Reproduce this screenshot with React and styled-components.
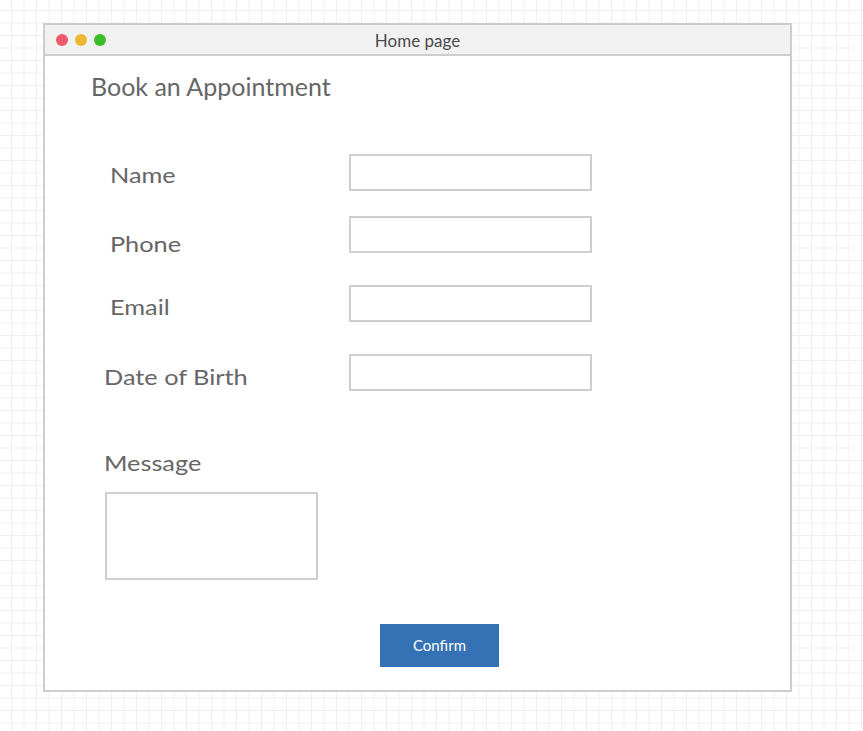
import React from "react";
import styled, { createGlobalStyle } from "styled-components";

const Global = createGlobalStyle`
  html, body { margin: 0; padding: 0; }
  body {
    width: 863px;
    height: 731px;
    overflow: hidden;
    font-family: Lato, "Open Sans", sans-serif;
    background-color: #ffffff;
    background-image:
      linear-gradient(to right, #f0f0f0 1px, transparent 1px),
      linear-gradient(to bottom, #f0f0f0 1px, transparent 1px);
    background-size: 12.5px 12.5px;
    background-position: 11px 10px;
  }
`;

const Page = styled.div`
  padding: 23px 0 0 43px;
`;

const Window = styled.div`
  box-sizing: border-box;
  width: 749px;
  height: 669px;
  border: 2px solid #cdcdcd;
  background: #ffffff;
  display: flex;
  flex-direction: column;
`;

const TitleBar = styled.div`
  position: relative;
  height: 29px;
  background: #f1f1f1;
  border-bottom: 2px solid #cdcdcd;
  display: flex;
  align-items: center;
  justify-content: center;
`;

const Dots = styled.div`
  position: absolute;
  left: 11px;
  top: 0;
  height: 29px;
  display: flex;
  align-items: center;
  gap: 7px;
`;

const Dot = styled.span`
  width: 12px;
  height: 12px;
  border-radius: 50%;
  background: ${(p) => p.$color};
`;

const Title = styled.div`
  font-size: 17px;
  line-height: 29px;
  padding-top: 2px;
  color: #4a4a4a;
`;

const Content = styled.div`
  display: flex;
  flex-direction: column;
  align-items: flex-start;
`;

const Heading = styled.h1`
  margin: 15px 0 0 46px;
  font-weight: 400;
  font-size: 25px;
  line-height: 30px;
  color: #666666;
`;

const Row = styled.div`
  display: flex;
  height: 36px;
  margin-top: ${(p) => p.$top}px;
`;

const LabelText = styled.span`
  display: inline-block;
  font-size: 22px;
  line-height: 26px;
  color: #666666;
  transform: scaleX(1.15);
  transform-origin: left center;
  white-space: nowrap;
`;

const Label = styled.div`
  box-sizing: border-box;
  width: 304px;
  padding-left: ${(p) => p.$indent}px;
  margin-top: ${(p) => p.$shift}px;
  line-height: 26px;
`;

const Field = styled.div`
  box-sizing: border-box;
  width: 243px;
  height: 37px;
  border: 2px solid #cfcfcf;
  background: #ffffff;
`;

const MessageLabel = styled.div`
  margin: 60px 0 0 59px;
  line-height: 26px;
`;

const MessageBox = styled.div`
  box-sizing: border-box;
  width: 213px;
  height: 88px;
  margin: 14px 0 0 60px;
  border: 2px solid #cfcfcf;
`;

const ConfirmButton = styled.button`
  margin: 44px 0 0 335px;
  width: 119px;
  height: 43px;
  border: none;
  background: #3571b5;
  color: #ffffff;
  font-family: Lato, "Open Sans", sans-serif;
  font-size: 15px;
  padding: 0 0 2px;
`;

const fields = [
  { label: "Name", top: 53, indent: 65, shift: 8 },
  { label: "Phone", top: 26, indent: 65, shift: 15 },
  { label: "Email", top: 33, indent: 65, shift: 9 },
  { label: "Date of Birth", top: 33, indent: 59, shift: 10 },
];

export default function App() {
  return (
    <>
      <Global />
      <Page>
        <Window>
          <TitleBar>
            <Dots>
              <Dot $color="#ee5a6a" />
              <Dot $color="#efb631" />
              <Dot $color="#3cbd2c" />
            </Dots>
            <Title>Home page</Title>
          </TitleBar>
          <Content>
            <Heading>Book an Appointment</Heading>
            {fields.map((f) => (
              <Row key={f.label} $top={f.top}>
                <Label $indent={f.indent} $shift={f.shift}>
                  <LabelText>{f.label}</LabelText>
                </Label>
                <Field />
              </Row>
            ))}
            <MessageLabel>
              <LabelText>Message</LabelText>
            </MessageLabel>
            <MessageBox />
            <ConfirmButton>Confirm</ConfirmButton>
          </Content>
        </Window>
      </Page>
    </>
  );
}
